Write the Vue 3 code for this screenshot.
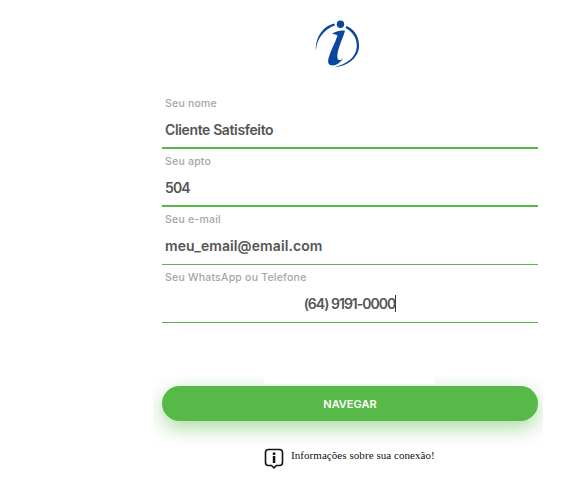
<script setup>
const fields = [
  { label: 'Seu nome', value: 'Cliente Satisfeito', thick: true, kind: 'name' },
  { label: 'Seu apto', value: '504', thick: true, kind: 'apto' },
  { label: 'Seu e-mail', value: 'meu_email@email.com', thick: false, kind: 'email' },
  { label: 'Seu WhatsApp ou Telefone', value: '(64) 9191-0000', thick: false, kind: 'phone' },
]
</script>

<template>
  <main class="page">
    <header class="logo-row">
      <svg class="logo" width="50" height="52" viewBox="0 0 50 52" aria-label="Logo">
        <circle cx="27.500" cy="6.300" r="3.700" fill="#0b46a0" />
        <path d="M21.500 5.500C11 7.500 2.500 18 2.800 32.500C4 20 11.500 11 21.800 7.500Z" fill="#0b46a0" />
        <path d="M33.500 8C42 11.500 46.800 20 46 29.500C45 39.500 35 48.500 21.500 49C33 46.500 43.300 39.500 43.800 28.500C44 20 39.500 13.500 32.500 10Z" fill="#0b46a0" />
        <path d="M19 15.800C22 13.600 27.500 12 32 12.700C31 17 26.500 27 25 33C24 37.500 24 41.500 26 42C27.500 42.300 29 41.300 30.500 40C27.500 44.500 23.500 47.500 19.500 47.500C15.500 47.500 14.500 44.500 15.500 40.500C17 34 22.500 24 24.500 17.500C22.500 16.500 20.500 16 19 15.800Z" fill="#0b46a0" />
      </svg>
    </header>

    <section class="form">
      <div v-for="f in fields" :key="f.label" class="field" :class="{ thick: f.thick }">
        <label class="label">{{ f.label }}</label>
        <div class="value" :class="f.kind">
          <span :class="{ caret: f.kind === 'phone' }">{{ f.value }}</span>
        </div>
      </div>
    </section>

    <div class="action">
      <div class="cover"></div>
      <button class="nav-btn" type="button">NAVEGAR</button>
    </div>

    <footer class="info">
      <svg class="info-icon" width="20" height="21" viewBox="0 0 20 21" aria-hidden="true">
        <path d="M4.500 1.500H15.500C17.200 1.500 18.500 2.800 18.500 4.500V14.500C18.500 16.200 17.200 17.500 15.500 17.500H12.500L10 19.800L7.500 17.500H4.500C2.800 17.500 1.500 16.200 1.500 14.500V4.500C1.500 2.800 2.800 1.500 4.500 1.500Z" fill="none" stroke="#111" stroke-width="1.600" />
        <rect x="8.800" y="4.500" width="2.500" height="2.500" fill="#111" />
        <rect x="8.800" y="8" width="2.500" height="7" fill="#111" />
      </svg>
      <span class="info-text">Informações sobre sua conexão!</span>
    </footer>
  </main>
</template>

<style>
html, body { margin: 0; background: #fff; }
</style>

<style scoped>
.page {
  width: 578px;
  height: 493px;
  overflow: hidden;
  background: #fff;
  font-family: Inter, "Noto Sans", sans-serif;
}
.logo-row {
  height: 91px;
  padding: 18px 0 0 313px;
  box-sizing: border-box;
}
.logo { display: block; }
.form {
  width: 376px;
  margin-left: 162px;
  display: flex;
  flex-direction: column;
}
.field {
  height: 58px;
  box-sizing: border-box;
  border-bottom: 1px solid #55b948;
  display: flex;
  flex-direction: column;
}
.field.thick { border-bottom: 2px solid #55b948; }
.label {
  padding: 6px 0 0 3px;
  height: 14px;
  font-size: 10.5px;
  line-height: 14px;
  letter-spacing: 0.22px;
  color: #a6a6a6;
  font-weight: 500;
}
.value {
  margin-top: 9px;
  padding-left: 3px;
  font-size: 14px;
  line-height: 20px;
  font-weight: 600;
  color: #555;
}
.value.name { letter-spacing: -0.37px; }
.value.apto { letter-spacing: -0.9px; }
.value.email { letter-spacing: 0.09px; }
.value.phone {
  text-align: center;
  padding-left: 0;
  letter-spacing: -0.98px;
}
.caret { border-right: 1px solid #333; }
.action {
  position: relative;
  width: 390px;
  height: 70px;
  margin: 53px 0 0 153px;
  padding: 10px 5px 0 9px;
  box-sizing: border-box;
  overflow: hidden;
}
.cover {
  position: absolute;
  left: 111px;
  top: 0;
  width: 170px;
  height: 8px;
  background: #fff;
  z-index: 1;
}
.nav-btn {
  display: block;
  width: 376px;
  height: 35px;
  border: 0;
  border-radius: 18px;
  background: #57b947;
  color: #fff;
  font-family: inherit;
  font-size: 11px;
  font-weight: 600;
  box-shadow: 0 7px 20px rgba(87, 185, 71, 0.5);
}
.info {
  margin-top: 2px;
  padding-left: 264px;
  display: flex;
  align-items: flex-start;
  gap: 7px;
}
.info-icon { display: block; }
.info-text {
  font-family: "Liberation Serif", serif;
  font-size: 11px;
  line-height: 14px;
  letter-spacing: 0.06px;
  color: #111;
  white-space: nowrap;
}
</style>
